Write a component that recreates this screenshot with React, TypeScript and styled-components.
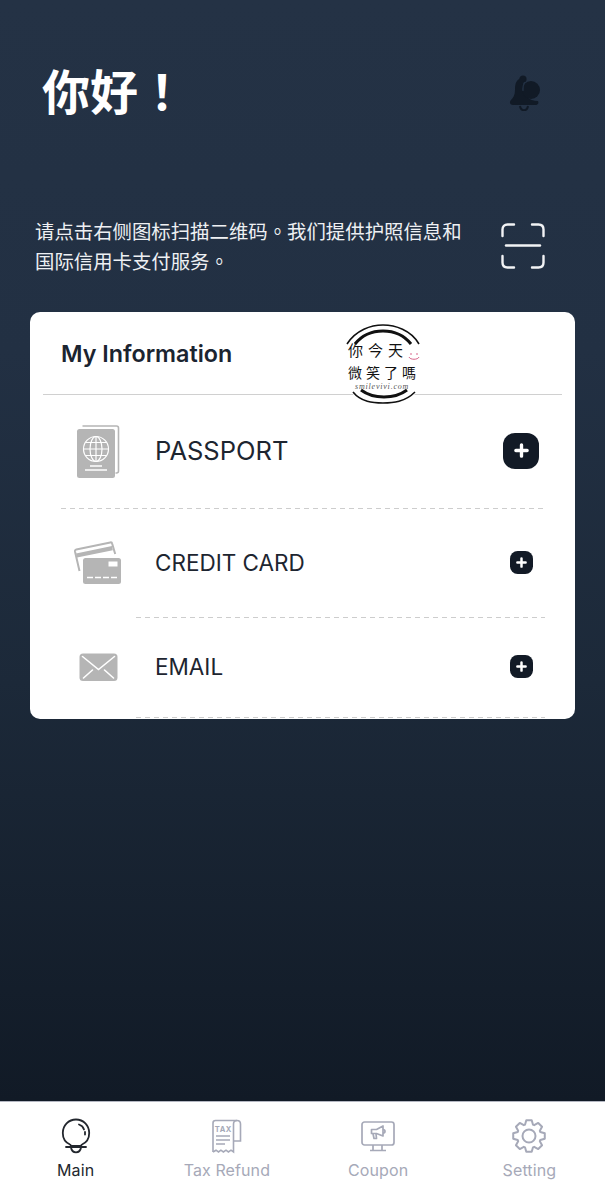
import React from 'react';
import styled, { createGlobalStyle } from 'styled-components';

const GlobalStyle = createGlobalStyle`
    html, body {
        margin: 0;
        padding: 0;
        background: #111a26;
    }
    * {
        box-sizing: border-box;
    }
`;

const CJK = `"Noto Sans CJK TC", "Noto Sans CJK SC", "Noto Sans", sans-serif`;

const Screen = styled.div`
    width: 605px;
    height: 1200px;
    display: flex;
    flex-direction: column;
    overflow: hidden;
    font-family: Inter, "Noto Sans CJK SC", sans-serif;
`;

const Content = styled.main`
    flex: 1;
    padding: 62px 30px 0;
    background: linear-gradient(180deg, #243245 0%, #223043 32%, #1c2939 62%, #111a26 100%);
`;

const GreetingRow = styled.header`
    height: 60px;
    display: flex;
    align-items: center;
    justify-content: space-between;
    padding: 0 33px 0 12px;
`;

const Greeting = styled.h1`
    margin: 0;
    padding-bottom: 6px;
    font-family: ${CJK};
    font-size: 48px;
    line-height: 54px;
    font-weight: 700;
    color: #fff;
`;

const Intro = styled.section`
    display: flex;
    align-items: center;
    justify-content: space-between;
    margin-top: 94px;
    padding: 0 30px 0 5px;
`;

const IntroText = styled.p`
    margin: 0;
    width: 432px;
    font-family: ${CJK};
    font-size: 19.4px;
    line-height: 30px;
    color: #eef0f3;
`;

const Card = styled.section`
    position: relative;
    height: 407px;
    margin-top: 36px;
    display: flex;
    flex-direction: column;
    background: #fff;
    border-radius: 10px;
    overflow: hidden;
`;

const CardHeader = styled.div`
    height: 83px;
    margin: 0 13px;
    padding: 0 18px;
    display: flex;
    align-items: center;
    border-bottom: 1px solid #d0d0d0;
`;

const CardTitle = styled.h2`
    margin: 0;
    font-size: 23.3px;
    font-weight: 600;
    color: #1b2430;
`;

const Row = styled.div<{ $height: number }>`
    height: ${props => props.$height}px;
    display: grid;
    grid-template-columns: 60px 1fr 36px;
    column-gap: 27px;
    align-items: center;
    padding: 0 36px 0 38px;
`;

const RowIcon = styled.div`
    display: flex;
    justify-content: center;
    align-items: center;
`;

const RowLabel = styled.span<{ $size: number }>`
    padding-bottom: 2px;
    font-size: ${props => props.$size}px;
    font-weight: 400;
    color: #1d2530;
`;

const AddButton = styled.button<{ $size: number }>`
    width: ${props => props.$size}px;
    height: ${props => props.$size}px;
    justify-self: center;
    margin-bottom: 2px;
    padding: 0;
    display: flex;
    align-items: center;
    justify-content: center;
    border: 0;
    border-radius: ${props => props.$size / 3}px;
    background: #121a26;
`;

const Dashes = styled.div<{ $inset: number }>`
    flex: none;
    height: 1px;
    margin: 0 30px 0 ${props => props.$inset}px;
    background: repeating-linear-gradient(90deg, #cdcdcd 0 5px, transparent 5px 9px);
`;

const Watermark = styled.div`
    position: absolute;
    left: 311px;
    top: 11px;
    width: 86px;
    height: 84px;
    padding: 16px 0 0 7px;
    display: flex;
    flex-direction: column;
    align-items: flex-start;
    font-family: ${CJK};
    font-weight: 400;
    color: #111;
    background: #fff;
    border-radius: 50%;
`;

const WatermarkArcs = styled.svg`
    position: absolute;
    inset: 0;
`;

const WatermarkLine = styled.div<{ $size: number; $spacing: number }>`
    position: relative;
    font-size: ${props => props.$size}px;
    line-height: 22px;
    letter-spacing: ${props => props.$spacing}px;
    white-space: nowrap;
`;

const WatermarkUrl = styled.div`
    position: relative;
    margin-left: 7px;
    font-family: "Liberation Serif", serif;
    font-style: italic;
    font-size: 8px;
    line-height: 7px;
    letter-spacing: 0.8px;
    color: #555;
`;

const TabBar = styled.nav`
    height: 99px;
    display: grid;
    grid-template-columns: repeat(4, 1fr);
    padding-top: 16px;
    background: #fff;
    border-top: 1px solid #b4b7c2;
`;

const Tab = styled.div<{ $active?: boolean }>`
    display: flex;
    flex-direction: column;
    align-items: center;
    gap: 4px;
    color: ${props => props.$active ? '#23272e' : '#a6a9b8'};
    font-size: 16px;
    letter-spacing: 0.1px;
    line-height: 24px;
`;

const TabIcon = styled.div`
    height: 36px;
    display: flex;
    align-items: center;
    justify-content: center;
`;

const BellIcon = () => (
    <svg width="34" height="38" viewBox="0 0 34 38">
        <circle cx="15" cy="6" r="3.6" fill="#111a26" />
        <path d="M14 5C8 6 7 11 7 17c0 5-2 8-4 10-2 2-1 5 2 5h22c3 0 4-2 3-4-9 0-15-6-15-14 0-4 1-7 3-9z" fill="#111a26" />
        <path d="M12 33c.5 3 2.200 4.200 4 4.200s3.500-1.200 4-4.200" fill="none" stroke="#111a26" strokeWidth="2" />
        <circle cx="23" cy="17" r="9" fill="#111a26" />
        <path d="M17 9c-2 3-2.500 6-2 9" stroke="#223043" strokeWidth="1.200" fill="none" />
    </svg>
);

const ScanIcon = () => (
    <svg width="44" height="46" viewBox="0 0 44 46" fill="none" stroke="#f2f3f5" strokeWidth="2.400" strokeLinecap="round">
        <path d="M1.500 13V6.500C1.500 3.500 3.500 1.500 6.500 1.500H13" />
        <path d="M31 1.500h6.500c3 0 5 2 5 5V13" />
        <path d="M1.500 33v6.500c0 3 2 5 5 5H13" />
        <path d="M31 44.500h6.500c3 0 5-2 5-5V33" />
        <path d="M5 22.500h34" />
    </svg>
);

const PassportIcon = () => (
    <svg width="44" height="54" viewBox="0 0 44 54">
        <path d="M6.500 1h34c1.200 0 2 .8 2 2v43c0 1.200-.8 2-2 2h-1" fill="none" stroke="#b5b5b5" strokeWidth="1.600" />
        <rect x="1" y="4" width="38" height="49" rx="2.500" fill="#b5b5b5" />
        <g fill="none" stroke="#fff" strokeWidth="1.200">
            <circle cx="20" cy="24" r="12.500" />
            <ellipse cx="20" cy="24" rx="6" ry="12.500" />
            <path d="M20 11.500v25M7.500 24h25M9.500 17.500h21M9.500 30.500h21" />
        </g>
        <path d="M14 41h12" stroke="#fff" strokeWidth="1.300" />
        <path d="M9 45h22" stroke="#fff" strokeWidth="1.300" />
    </svg>
);

const CardsIcon = () => (
    <svg width="48" height="44" viewBox="0 0 48 44">
        <path d="M5.500 30L1 10.500c-.2-1 .3-1.700 1.300-1.900l34-7.200c1-.2 1.700.3 1.900 1.300l3 10.300" fill="none" stroke="#b5b5b5" strokeWidth="2" />
        <path d="M2 12.500L38 5l.8 4.200L3 16.500z" fill="#b5b5b5" />
        <rect x="9" y="17" width="38" height="26" rx="2.500" fill="#b5b5b5" />
        <rect x="34.500" y="20.500" width="9" height="5" fill="#fff" />
        <path d="M13 36.500h30" stroke="#fff" strokeWidth="1.400" strokeDasharray="6 2" />
    </svg>
);

const MailIcon = () => (
    <svg width="39" height="29" viewBox="0 0 39 29">
        <rect x="0.500" y="0.500" width="38" height="27.500" rx="3.500" fill="#b5b5b5" />
        <path d="M3.500 3.500l16 13 16-13M4.500 25l9-8M34.500 25l-9-8" fill="none" stroke="#fff" strokeWidth="1.600" strokeLinecap="round" />
    </svg>
);

const PlusIcon = ({ size }: { size: number }) => (
    <svg width={size} height={size} viewBox="0 0 12 12">
        <path d="M6 1.500v9M1.500 6h9" stroke="#fff" strokeWidth="2.700" strokeLinecap="round" />
    </svg>
);

const BulbIcon = () => (
    <svg width="30" height="36" viewBox="0 0 30 36" fill="none" stroke="#23272e" strokeWidth="1.800" strokeLinecap="round">
        <path d="M9 26.500C4.500 24.500 1.800 20 1.800 15 1.800 7.500 7.600 1.500 15 1.500S28.200 7.500 28.200 15c0 5-2.700 9.500-7.200 11.500-.5.200-.8.800-.8 1.500H9.800c0-.7-.3-1.300-.8-1.500z" />
        <path d="M5 29h20" />
        <path d="M10 29.500c.5 3 2.500 4.800 5 4.800s4.500-1.800 5-4.800" />
        <path d="M18 6.500c2.500.8 4.300 2.500 5 5M24 14v2.500" />
    </svg>
);

const ReceiptIcon = () => (
    <svg width="31" height="35" viewBox="0 0 31 35" fill="none" stroke="#a6a9b8" strokeWidth="1.600">
        <path d="M2 33V4c0-1.500 1-2.500 2.500-2.500H26c2 0 3.500 1.500 3.500 3.500v17h-6.500" />
        <path d="M26 1.500c-2 0-3.500 1.500-3.500 3.500v28l-2.500-1.800-2.600 1.800-2.400-1.800-2.600 1.800-2.500-1.800-2.400 1.800-2.500-1.800L2 33" />
        <text x="3.800" y="13" fontSize="7.500" fontWeight="700" fill="#a6a9b8" stroke="none" fontFamily="Inter, sans-serif" letterSpacing="0.500">TAX</text>
        <path d="M5 17h14M5 21h14M5 25h9" />
    </svg>
);

const MonitorIcon = () => (
    <svg width="34" height="31" viewBox="0 0 34 31" fill="none" stroke="#a6a9b8" strokeWidth="1.700" strokeLinejoin="round">
        <rect x="1" y="1" width="32" height="23" rx="2.500" />
        <path d="M12 24v5.500M21 24v5.500M9 29.500h16" />
        <path d="M10.500 8.500h5l6.500-3.500v10l-6.500-2.500h-5z" />
        <path d="M12 12.500l1 5h2.500l-.5-5M22 8.500c1.500 0 2 1 2 1.800s-.5 1.800-2 1.800" />
    </svg>
);

// 8 tooth gear, rounded off by the stroke join
const gearPath = () => {
    const points: string[] = [];
    const cx = 17;
    const cy = 17;
    for (let i = 0; i < 8; i++) {
        const a = (i * Math.PI) / 4 - Math.PI / 2;
        const at = (r: number, off: number) => `${(cx + r * Math.cos(a + off)).toFixed(2)} ${(cy + r * Math.sin(a + off)).toFixed(2)}`;
        points.push(at(12, -0.34), at(16, -0.17), at(16, 0.17), at(12, 0.34));
    }
    return `M${points.join('L')}Z`;
};

const GearIcon = () => (
    <svg width="34" height="34" viewBox="0 0 34 34" fill="none" stroke="#a6a9b8" strokeWidth="2" strokeLinejoin="round">
        <path d={gearPath()} />
        <circle cx="17" cy="17" r="6.500" />
    </svg>
);

const rows = [
    { label: 'PASSPORT', labelSize: 25.5, height: 113, button: 36, plus: 15, icon: <PassportIcon />, inset: 31 },
    { label: 'CREDIT CARD', labelSize: 22.5, height: 108, button: 23, plus: 11, icon: <CardsIcon />, inset: 106 },
    { label: 'EMAIL', labelSize: 22.5, height: 99, button: 23, plus: 11, icon: <MailIcon />, inset: 106 },
];

const tabs = [
    { label: 'Main', icon: <BulbIcon />, active: true },
    { label: 'Tax Refund', icon: <ReceiptIcon /> },
    { label: 'Coupon', icon: <MonitorIcon /> },
    { label: 'Setting', icon: <GearIcon /> },
];

export default function App() {
    return (
        <Screen>
            <GlobalStyle />
            <Content>
                <GreetingRow>
                    <Greeting>你好！</Greeting>
                    <BellIcon />
                </GreetingRow>
                <Intro>
                    <IntroText>请点击右侧图标扫描二维码。我们提供护照信息和国际信用卡支付服务。</IntroText>
                    <ScanIcon />
                </Intro>
                <Card>
                    <CardHeader>
                        <CardTitle>My Information</CardTitle>
                    </CardHeader>
                    {rows.map(row => (
                        <React.Fragment key={row.label}>
                            <Row $height={row.height}>
                                <RowIcon>{row.icon}</RowIcon>
                                <RowLabel $size={row.labelSize}>{row.label}</RowLabel>
                                <AddButton type="button" $size={row.button}>
                                    <PlusIcon size={row.plus} />
                                </AddButton>
                            </Row>
                            <Dashes $inset={row.inset} />
                        </React.Fragment>
                    ))}
                    <Watermark>
                        <WatermarkArcs viewBox="0 0 86 84" fill="none" stroke="#111">
                            <path d="M6 21C15 7 30 2 42 2s28 5 36 19" strokeWidth="1.600" />
                            <path d="M14 21C22 11 32 8 42 8s20 3 28 13" strokeWidth="3" />
                            <path d="M12 69c8 10 20 11 30 11s22-1 32-11" strokeWidth="1.600" />
                            <path d="M20 67c8 6 16 7 23 7s15-1 23-7" strokeWidth="3" />
                            <path d="M70 30v2M76 30v2M68 34c1 3 9 3 10 0" stroke="#d9668c" strokeWidth="1" />
                        </WatermarkArcs>
                        <WatermarkLine $size={15} $spacing={5}>你今天</WatermarkLine>
                        <WatermarkLine $size={14} $spacing={4}>微笑了嗎</WatermarkLine>
                        <WatermarkUrl>smilevivi.com</WatermarkUrl>
                    </Watermark>
                </Card>
            </Content>
            <TabBar>
                {tabs.map(tab => (
                    <Tab key={tab.label} $active={tab.active}>
                        <TabIcon>{tab.icon}</TabIcon>
                        {tab.label}
                    </Tab>
                ))}
            </TabBar>
        </Screen>
    );
}
